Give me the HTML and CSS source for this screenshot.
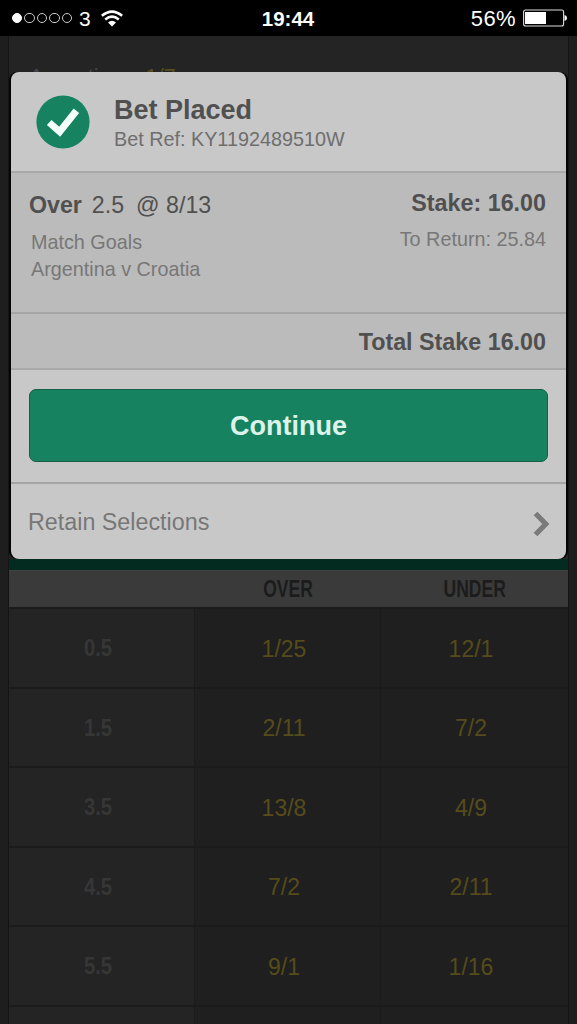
FILE: index.html
```html
<!DOCTYPE html>
<html lang="en">
<head>
    <meta charset="UTF-8">
    <meta name="viewport" content="width=device-width, initial-scale=1.0">
    <title>Bet Placed</title>
    <link rel="stylesheet" href="styles.css">
</head>
<body>
    <header class="status-bar">
        <div class="status-left">
            <div class="signal">
                <i class="dot on"></i><i class="dot"></i><i class="dot"></i><i class="dot"></i><i class="dot"></i>
            </div>
            <span class="carrier">3</span>
            <svg class="wifi" width="22" height="17" viewBox="0 0 22 17">
                <path d="M0.8 5.8 Q11 -2.6 21.2 5.8" fill="none" stroke="#fff" stroke-width="2.7"/>
                <path d="M4.2 9.5 Q11 3.8 17.8 9.5" fill="none" stroke="#fff" stroke-width="2.7"/>
                <path d="M7 12.4 Q11 9.2 15 12.4 L11 16.4 Z" fill="#fff"/>
            </svg>
        </div>
        <span class="time">19:44</span>
        <div class="status-right">
            <span class="percent">56%</span>
            <svg class="battery" width="44" height="18" viewBox="0 0 44 18">
                <rect x="0.6" y="1" width="40" height="16" rx="2" fill="none" stroke="#ddd" stroke-width="1.1"/>
                <rect x="2" y="3" width="21" height="12" fill="#fff"/>
                <path d="M41.5 6 Q44 6.5 44 9 Q44 11.5 41.5 12 Z" fill="#fff"/>
            </svg>
        </div>
    </header>

    <main class="page">
        <section class="market">
            <div class="team-row">
                <span>Argentina</span>
                <span class="team-odds">1/7</span>
            </div>
            <div class="market-title"></div>
            <div class="odds-head">
                <span></span>
                <span class="over"><b>OVER</b></span>
                <span class="under"><b>UNDER</b></span>
            </div>
            <div class="odds">
                <div class="line"><b>0.5</b></div><div>1/25</div><div>12/1</div>
                <div class="line"><b>1.5</b></div><div>2/11</div><div>7/2</div>
                <div class="line"><b>3.5</b></div><div>13/8</div><div>4/9</div>
                <div class="line"><b>4.5</b></div><div>7/2</div><div>2/11</div>
                <div class="line"><b>5.5</b></div><div>9/1</div><div>1/16</div>
                <div class="line"></div><div></div><div></div>
            </div>
        </section>
    </main>

    <div class="receipt">
        <div class="receipt-head">
            <svg class="tick" width="54" height="54" viewBox="0 0 54 54">
                <circle cx="27" cy="27" r="26.6" fill="#16825f"/>
                <path d="M13.2 27.5 L23.7 36.8 L40.4 15.8" fill="none" stroke="#f4fffa" stroke-width="7"/>
            </svg>
            <div>
                <h1>Bet Placed</h1>
                <p>Bet Ref: KY1192489510W</p>
            </div>
        </div>
        <div class="bet">
            <div class="bet-info">
                <div class="selection"><b>Over</b><span>2.5</span><span class="price">@ 8/13</span></div>
                <p>Match Goals</p>
                <p>Argentina v Croatia</p>
            </div>
            <div class="bet-stake">
                <b>Stake: 16.00</b>
                <p>To Return: 25.84</p>
            </div>
        </div>
        <div class="total">Total Stake 16.00</div>
        <div class="action">
            <button type="button">Continue</button>
        </div>
        <div class="retain">
            <span>Retain Selections</span>
            <svg width="18" height="28" viewBox="0 0 18 28">
                <path d="M3.5 3.5 L13.8 14 L3.5 24.5" fill="none" stroke="#7a7a7a" stroke-width="5.2"/>
            </svg>
        </div>
    </div>
</body>
</html>
```
FILE: styles.css
```css
* {
    box-sizing: border-box;
}

body {
    margin: 0;
    height: 1024px;
    position: relative;
    overflow: hidden;
    background: #1e1e1e;
    font-family: "Liberation Sans", Arial, sans-serif;
}

h1, p {
    margin: 0;
}

/* status bar */
.status-bar {
    height: 36px;
    padding: 0 10px 0 12px;
    display: grid;
    grid-template-columns: 1fr auto 1fr;
    align-items: center;
    background: #000;
    color: #fff;
    font-size: 21px;
}

.status-left,
.status-right,
.signal {
    display: flex;
    align-items: center;
}

.signal {
    gap: 2px;
}

.dot {
    width: 10.4px;
    height: 10.4px;
    border: 1px solid #ccc;
    border-radius: 50%;
}

.dot.on {
    background: #fff;
    border-color: #fff;
}

.carrier {
    margin: 1px 0 0 7px;
}

.wifi {
    margin-left: 10px;
}

.time {
    font-size: 20.5px;
    font-weight: bold;
    margin: 2px 3px 0 0;
}

.status-right {
    justify-content: flex-end;
}

.percent {
    margin: 2px 7px 0 0;
    font-size: 22px;
    letter-spacing: 0.4px;
}

/* coupon behind the receipt */
.page {
    height: 988px;
    padding: 0 9px;
    overflow: hidden;
}

.market {
    height: 100%;
    background: #242424;
    box-shadow: 0 0 0 1px #141414;
}

.team-row {
    height: 523px;
    padding: 28px 20px 0;
    display: flex;
    gap: 22px;
    font-size: 22px;
    color: #474747;
}

.team-odds {
    color: #574d1a;
}

.market-title {
    height: 11px;
    background: #042b1f;
}

.odds-head {
    height: 38px;
    padding-bottom: 2px;
    display: grid;
    grid-template-columns: 186px 186px 187px;
    align-items: center;
    text-align: center;
    background: #3a3a3a;
    border-top: 1px solid #424242;
    color: #1c1c1c;
    font-size: 24px;
}

.odds-head b {
    display: inline-block;
    transform: scaleX(0.73);
}

.over {
    padding-left: 1px;
}

.odds {
    display: grid;
    grid-template-columns: 185px 186px 188px;
    grid-auto-rows: 79.5px;
    margin-top: -1px;
}

.odds div {
    display: flex;
    align-items: center;
    justify-content: center;
    padding: 3px 7px 0 0;
    background: #1f1f1f;
    border-top: 2px solid #1b1b1b;
    border-left: 1px solid #1b1b1b;
    color: #564c1b;
    font-size: 23px;
}

.odds .line {
    background: #242424;
    border-left-color: #242424;
    color: #363636;
    padding: 2px 8px 0 0;
}

.line b {
    transform: scaleX(0.88);
}

/* receipt */
.receipt {
    position: absolute;
    top: 72px;
    left: 11px;
    width: 555px;
    height: 487px;
    border-radius: 8px;
    overflow: hidden;
    background: #c8c8c8;
    box-shadow: -2px 0 0 #050505, 2px 0 0 #050505;
    color: #777;
}

.receipt-head {
    height: 99px;
    padding: 0 25px;
    display: flex;
    align-items: center;
    gap: 24px;
}

.receipt-head h1 {
    font-size: 27px;
    line-height: 32px;
    color: #505050;
}

.receipt-head p {
    font-size: 19.8px;
    line-height: 26px;
    color: #6e6e6e;
}

.receipt-head div {
    padding-top: 2px;
}

.bet {
    height: 141px;
    padding: 17px 20px 0 18px;
    display: flex;
    justify-content: space-between;
    background: #bbb;
    border-top: 2px solid #a9a9a9;
    font-size: 19.8px;
    line-height: 27px;
}

.selection {
    display: flex;
    gap: 10px;
    margin-bottom: 10px;
    font-size: 23.2px;
    color: #505050;
}

.price {
    margin-left: 2px;
}

.bet-info {
    padding-top: 2px;
}

.bet-info p {
    padding-left: 2px;
}

.bet-stake {
    text-align: right;
}

.bet-stake b {
    display: block;
    margin-bottom: 9px;
    font-size: 23.3px;
    color: #505050;
}

.total {
    height: 56px;
    padding-right: 20px;
    background: #bbb;
    border-top: 2px solid #a5a5a5;
    text-align: right;
    font-size: 23.3px;
    font-weight: bold;
    line-height: 56px;
    color: #505050;
}

.action {
    height: 114px;
    padding: 19px 18px;
    border-top: 2px solid #a9a9a9;
}

.action button {
    display: block;
    width: 100%;
    height: 73px;
    padding: 2px 0 0;
    background: #16825f;
    border: 1px solid #145f45;
    border-radius: 7px;
    color: #dcf3ea;
    font: bold 27px "Liberation Sans", Arial, sans-serif;
}

.retain {
    height: 77px;
    padding: 2px 16px 0 17px;
    display: flex;
    align-items: center;
    justify-content: space-between;
    border-top: 2px solid #a5a5a5;
    font-size: 23.3px;
}

.retain svg {
    margin-top: 2px;
}
```
